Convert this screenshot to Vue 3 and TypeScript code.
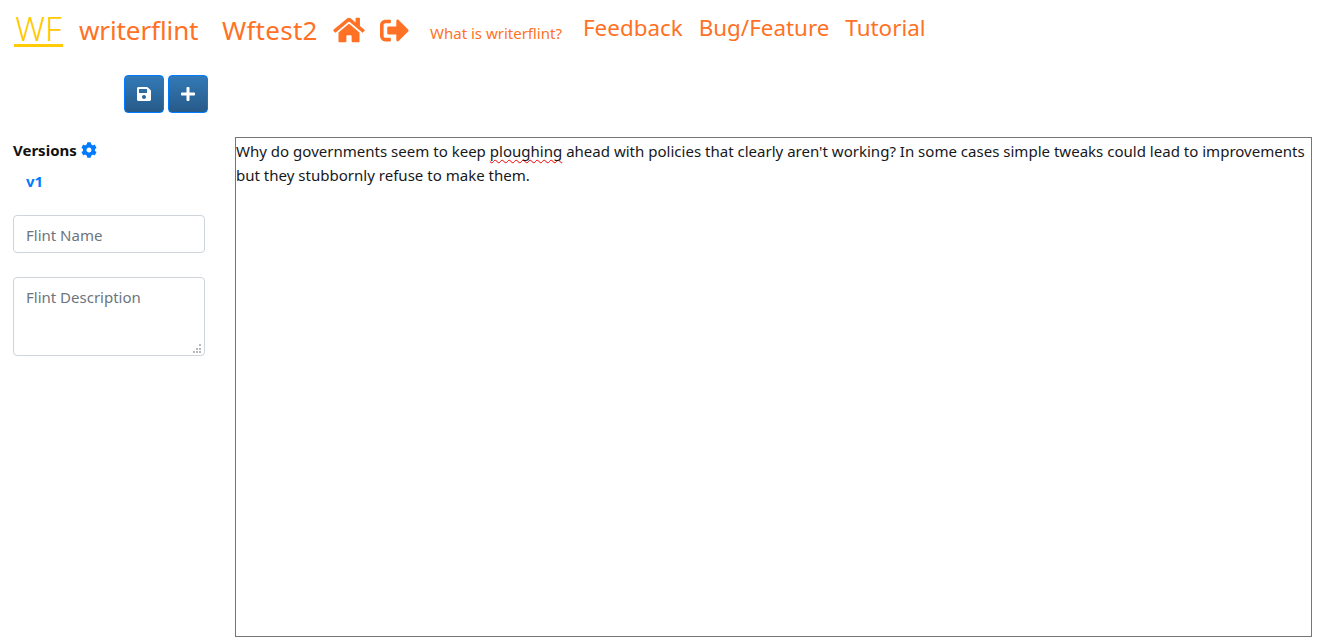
<script setup lang="ts">
const navLinks: string[] = ['Feedback', 'Bug/Feature', 'Tutorial']
</script>

<template>
  <div class="page">
    <header class="nav">
      <a class="logo">WF</a>
      <a class="brand">writerflint</a>
      <a class="brand project">Wftest2</a>
      <svg class="home" viewBox="0 0 576 512"><path fill="currentColor" d="M280.37 148.26L96 300.11V464a16 16 0 0 0 16 16l112.06-.29a16 16 0 0 0 15.92-16V368a16 16 0 0 1 16-16h64a16 16 0 0 1 16 16v95.64a16 16 0 0 0 16 16.05L464 480a16 16 0 0 0 16-16V300L295.67 148.26a12.19 12.19 0 0 0-15.3 0zM571.6 251.47L488 182.56V44.05a12 12 0 0 0-12-12h-56a12 12 0 0 0-12 12v72.61L318.47 43a48 48 0 0 0-61 0L4.34 251.47a12 12 0 0 0-1.6 16.9l25.5 31A12 12 0 0 0 45.15 301l235.22-193.74a12.19 12.19 0 0 1 15.3 0L530.9 301a12 12 0 0 0 16.9-1.6l25.5-31a12 12 0 0 0-1.7-16.93z" /></svg>
      <svg class="signout" viewBox="0 0 512 512"><path fill="currentColor" d="M497 273L329 441c-15 15-41 4.5-41-17v-96H152c-13.3 0-24-10.7-24-24v-96c0-13.3 10.7-24 24-24h136V88c0-21.4 25.9-32 41-17l168 168c9.3 9.4 9.3 24.6 0 34zM192 436v-40c0-6.6-5.4-12-12-12H96c-17.7 0-32-14.3-32-32V160c0-17.7 14.3-32 32-32h84c6.6 0 12-5.4 12-12V76c0-6.6-5.4-12-12-12H96c-53 0-96 43-96 96v192c0 53 43 96 96 96h84c6.6 0 12-5.4 12-12z" /></svg>
      <a class="what">What is writerflint?</a>
      <a v-for="link in navLinks" :key="link" class="link">{{ link }}</a>
    </header>

    <div class="toolbar">
      <button class="btn" type="button" aria-label="Save">
        <svg class="save-icon" viewBox="0 0 448 512"><path fill="currentColor" d="M433.941 129.941l-83.882-83.882A48 48 0 0 0 316.118 32H48C21.49 32 0 53.49 0 80v352c0 26.51 21.49 48 48 48h352c26.51 0 48-21.49 48-48V163.882a48 48 0 0 0-14.059-33.941zM224 416c-35.346 0-64-28.654-64-64 0-35.346 28.654-64 64-64s64 28.654 64 64c0 35.346-28.654 64-64 64zm96-304.52V212c0 6.627-5.373 12-12 12H76c-6.627 0-12-5.373-12-12V108c0-6.627 5.373-12 12-12h228.52c3.183 0 6.235 1.264 8.485 3.515l3.48 3.48A11.996 11.996 0 0 1 320 111.48z" /></svg>
      </button>
      <button class="btn" type="button" aria-label="Add">
        <svg class="save-icon" viewBox="0 0 448 512"><path fill="currentColor" d="M416 208H272V64c0-17.67-14.33-32-32-32h-32c-17.67 0-32 14.33-32 32v144H32c-17.67 0-32 14.33-32 32v32c0 17.67 14.33 32 32 32h144v144c0 17.67 14.33 32 32 32h32c17.67 0 32-14.33 32-32V304h144c17.67 0 32-14.33 32-32v-32c0-17.67-14.33-32-32-32z" /></svg>
      </button>
    </div>

    <main class="main">
      <aside class="side">
        <div class="versions">
          <span>Versions</span>
          <svg class="cog" viewBox="0 0 512 512"><path fill="currentColor" d="M487.4 315.7l-42.6-24.6c4.3-23.2 4.3-47 0-70.2l42.6-24.6c4.9-2.8 7.1-8.6 5.5-14-11.1-35.6-30-67.8-54.7-94.6-3.8-4.1-10-5.1-14.8-2.3L380.8 110c-17.9-15.4-38.5-27.3-60.8-35.1V25.8c0-5.6-3.9-10.5-9.4-11.7-36.7-8.2-74.3-7.8-109.2 0-5.5 1.2-9.4 6.1-9.4 11.7V75c-22.2 7.9-42.8 19.8-60.8 35.1L88.7 85.5c-4.9-2.8-11-1.9-14.8 2.3-24.7 26.7-43.6 58.9-54.7 94.6-1.7 5.4.6 11.2 5.5 14L67.3 221c-4.3 23.2-4.3 47 0 70.2l-42.6 24.6c-4.9 2.8-7.1 8.6-5.5 14 11.1 35.6 30 67.8 54.7 94.6 3.8 4.1 10 5.1 14.8 2.3l42.6-24.6c17.9 15.4 38.5 27.3 60.8 35.1v49.2c0 5.6 3.9 10.5 9.4 11.7 36.7 8.2 74.3 7.8 109.2 0 5.5-1.2 9.4-6.1 9.4-11.7v-49.2c22.2-7.9 42.8-19.8 60.8-35.1l42.6 24.6c4.9 2.8 11 1.9 14.8-2.3 24.7-26.7 43.6-58.9 54.7-94.6 1.5-5.5-.7-11.3-5.6-14.1zM256 336c-44.1 0-80-35.9-80-80s35.9-80 80-80 80 35.9 80 80-35.9 80-80 80z" /></svg>
        </div>
        <div class="version">v1</div>
        <input class="field" type="text" placeholder="Flint Name" />
        <textarea class="field area" placeholder="Flint Description"></textarea>
      </aside>
      <section class="editor">Why do governments seem to keep <span class="misspelt">ploughing</span> ahead with policies that clearly aren't working? In some cases simple tweaks could lead to improvements but they stubbornly refuse to make them.</section>
    </main>
  </div>
</template>

<style>
html,
body {
  margin: 0;
  background: #fff;
}
</style>

<style scoped>
.page {
  width: 1318px;
  height: 644px;
  overflow: hidden;
  box-sizing: border-box;
  font-family: "Noto Sans", "Open Sans", sans-serif;
  color: #212529;
  font-size: 15px;
}
.nav {
  display: flex;
  align-items: flex-start;
  height: 75px;
  box-sizing: border-box;
  padding: 12px 0 0 14px;
  color: #ff7124;
}
.logo {
  width: 49px;
  height: 32px;
  box-sizing: content-box;
  border-bottom: 3px solid #ffcb05;
  color: #ffc800;
  font-size: 33px;
  line-height: 34px;
  font-weight: 300;
  text-align: center;
  margin-right: 16px;
}
.brand {
  font-size: 26px;
  line-height: 36px;
  width: 119px;
  margin-right: 24px;
  letter-spacing: -0.1px;
  white-space: nowrap;
}
.project {
  width: 95px;
  margin-right: 16px;
  letter-spacing: 0.25px;
}
.home {
  width: 32px;
  height: 28px;
  margin: 4px 15px 0 0;
}
.signout {
  width: 29px;
  height: 29px;
  margin: 4px 21px 0 0;
}
.what {
  font-size: 15px;
  line-height: 20px;
  width: 132px;
  margin: 11px 21px 0 0;
  white-space: nowrap;
}
.link {
  font-size: 22.4px;
  line-height: 32px;
  margin-right: 16px;
  white-space: nowrap;
}
.toolbar {
  display: flex;
  gap: 4px;
  height: 62px;
  padding-left: 124px;
}
.btn {
  width: 40px;
  height: 38px;
  padding: 0;
  display: flex;
  align-items: center;
  justify-content: center;
  color: #fff;
  border: 1px solid #007bff;
  border-radius: 4px;
  background: linear-gradient(#337ab7, #265a88);
}
.save-icon {
  width: 14px;
  height: 16px;
}
.main {
  display: grid;
  grid-template-columns: 192px 1077px;
  column-gap: 30px;
  padding-left: 13px;
}
.side {
  display: flex;
  flex-direction: column;
  align-items: flex-start;
}
.versions {
  display: flex;
  align-items: center;
  gap: 4px;
  height: 26px;
  font-weight: 700;
  color: #111;
}
.cog {
  width: 16px;
  height: 16px;
  color: #007bff;
}
.version {
  color: #007bff;
  font-weight: 700;
  line-height: 24px;
  padding: 6px 0 0 13px;
  height: 26px;
  margin-bottom: 20px;
}
.field {
  display: block;
  width: 192px;
  height: 38px;
  box-sizing: border-box;
  padding: 7px 12px 5px;
  font: inherit;
  line-height: 24px;
  color: #495057;
  background: #fff;
  border: 1px solid #ced4da;
  border-radius: 4px;
  outline: none;
}
.field::placeholder {
  color: #6c757d;
  opacity: 1;
}
.area {
  height: 79px;
  margin-top: 24px;
}
.area::-webkit-resizer {
  background-color: transparent;
  background-image:
    linear-gradient(#b8b8b8, #b8b8b8), linear-gradient(#b8b8b8, #b8b8b8),
    linear-gradient(#b8b8b8, #b8b8b8), linear-gradient(#b8b8b8, #b8b8b8),
    linear-gradient(#b8b8b8, #b8b8b8), linear-gradient(#b8b8b8, #b8b8b8);
  background-size: 2px 2px;
  background-repeat: no-repeat;
  background-position:
    10px 4px, 10px 8px, 7px 8px,
    10px 11px, 7px 11px, 4px 11px;
}
.editor {
  height: 500px;
  box-sizing: border-box;
  border: 1px solid #767676;
  padding-top: 1px;
  font-size: 15.04px;
  line-height: 24px;
  color: #16181b;
}
.misspelt {
  text-decoration: underline wavy #f00000 1px;
  text-decoration-skip-ink: none;
  text-underline-offset: 2px;
}
</style>
